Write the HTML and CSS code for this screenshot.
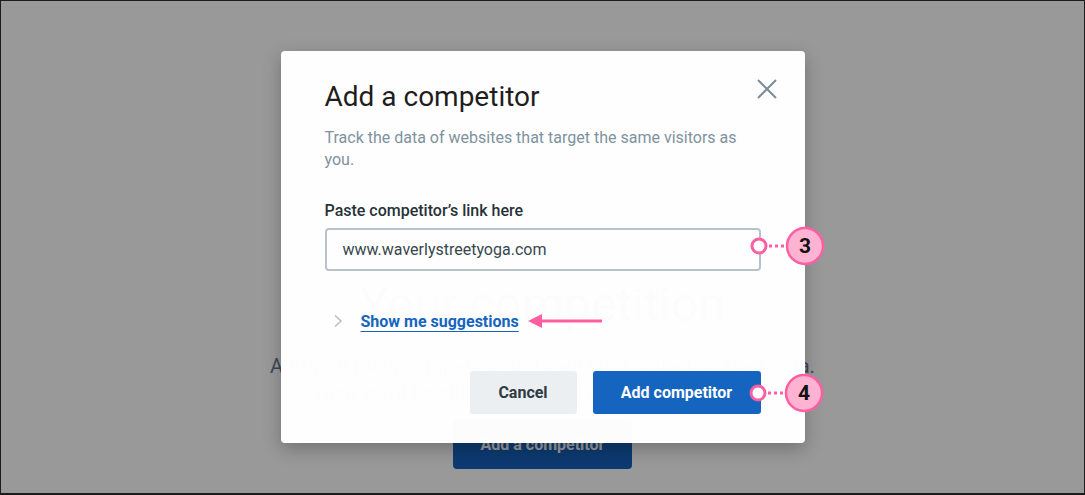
FILE: index.html
```html
<!DOCTYPE html>
<html lang="en">
<head>
<meta charset="utf-8">
<title>Add a competitor</title>
<link rel="stylesheet" href="styles.css">
</head>
<body>
<div class="screen">
  <main class="page">
    <div class="illus"></div>
    <h1 class="page-title">Your competition</h1>
    <p class="page-text">Add your main competitor and we'll start collecting their data.<br>Then you'll be able to compare your data with theirs.</p>
    <button class="page-btn" type="button">Add a competitor</button>
  </main>
  <div class="overlay">
    <section class="modal">
      <button class="close" type="button" aria-label="Close">
        <svg width="20" height="20" viewBox="0 0 20 20"><path d="M1 1L19 19M19 1L1 19" stroke="#7b8d98" stroke-width="2" fill="none"/></svg>
      </button>
      <h2 class="title">Add a competitor</h2>
      <p class="subtitle">Track the data of websites that target the same visitors as you.</p>
      <label class="label" for="link">Paste competitor’s link here</label>
      <div class="field">
        <div class="input" id="link">www.waverlystreetyoga.com</div>
        <svg class="marker" width="76" height="40" viewBox="0 0 76 40">
          <circle cx="9" cy="20" r="7" fill="#fff" stroke="#ff5fa2" stroke-width="3"/>
          <line x1="19" y1="20" x2="36" y2="20" stroke="#ff5fa2" stroke-width="3" stroke-dasharray="3 3"/>
          <circle cx="55" cy="20" r="18" fill="#ffb3d3" stroke="#ff5fa2" stroke-width="2.5"/>
          <text x="55" y="27" text-anchor="middle" class="marker-num">3</text>
        </svg>
      </div>
      <div class="suggest">
        <svg class="chev" width="10" height="14" viewBox="0 0 10 14"><path d="M2 1.5L8 7L2 12.5" stroke="#b3c0c8" stroke-width="1.6" fill="none"/></svg>
        <a class="link" href="#">Show me suggestions</a>
        <svg class="arrow" width="76" height="16" viewBox="0 0 76 16"><path d="M0 8L14 1V15Z" fill="#ff5fa2"/><line x1="12" y1="8" x2="74" y2="8" stroke="#ff5fa2" stroke-width="3"/></svg>
      </div>
      <div class="actions">
        <button class="btn btn-cancel" type="button">Cancel</button>
        <div class="field">
          <button class="btn btn-add" type="button">Add competitor</button>
          <svg class="marker" width="76" height="40" viewBox="0 0 76 40">
            <circle cx="9" cy="20" r="7" fill="#fff" stroke="#ff5fa2" stroke-width="3"/>
            <line x1="19" y1="20" x2="36" y2="20" stroke="#ff5fa2" stroke-width="3" stroke-dasharray="3 3"/>
            <circle cx="55" cy="20" r="18" fill="#ffb3d3" stroke="#ff5fa2" stroke-width="2.5"/>
            <text x="55" y="27" text-anchor="middle" class="marker-num">4</text>
          </svg>
        </div>
      </div>
    </section>
  </div>
</div>
</body>
</html>
```

FILE: styles.css
```css
* { box-sizing: border-box; }
html, body { margin: 0; padding: 0; }
body {
  font-family: Roboto, "Liberation Sans", Arial, sans-serif;
  background: #fff;
}
.screen {
  position: relative;
  width: 1085px;
  height: 495px;
  overflow: hidden;
  border: 1px solid #1c1c1c;
  border-bottom-width: 2px;
  background: #fff;
}
.page {
  display: flex;
  flex-direction: column;
  align-items: center;
  padding-top: 70px;
}
.illus {
  width: 170px;
  height: 160px;
  border-radius: 50%;
  background: #eef2f5;
}
.page-title {
  margin: 46px 0 0;
  font-size: 48px;
  line-height: 56px;
  font-weight: 400;
  color: #3b4a5a;
}
.page-text {
  margin: 20px 0 0;
  font-size: 20px;
  line-height: 27px;
  color: #66788e;
  text-align: center;
  white-space: nowrap;
}
.page-btn {
  margin-top: 12px;
  width: 179px;
  height: 50px;
  border: 0;
  border-radius: 4px;
  background: #1762bd;
  color: #fff;
  font: 700 16px Roboto, "Liberation Sans", sans-serif;
}
.overlay {
  position: absolute;
  inset: 0;
  background: rgba(0, 0, 0, 0.4);
  display: flex;
  align-items: center;
  justify-content: center;
}
.modal {
  position: relative;
  width: 524px;
  height: 392px;
  background: rgba(255, 255, 255, 0.99);
  border-radius: 4px;
  box-shadow: 0 6px 18px rgba(0, 0, 0, 0.25);
  padding: 30px 44px 29px;
  display: flex;
  flex-direction: column;
}
.close {
  position: absolute;
  top: 28px;
  right: 28px;
  width: 20px;
  height: 20px;
  padding: 0;
  border: 0;
  background: none;
  display: flex;
}
.title {
  margin: 0;
  font-size: 28px;
  line-height: 32px;
  font-weight: 400;
  color: #1e1e1e;
}
.subtitle {
  margin: 14px 0 0;
  max-width: 420px;
  font-size: 16px;
  line-height: 22px;
  color: #7f929e;
}
.label {
  margin-top: 30px;
  font-size: 16px;
  line-height: 20px;
  font-weight: 500;
  color: #263238;
}
.field {
  position: relative;
}
.input {
  margin-top: 7px;
  height: 43px;
  border: 2px solid #b7c3cb;
  border-radius: 4px;
  padding: 0 16px;
  display: flex;
  align-items: center;
  font-size: 16px;
  color: #37474f;
}
.marker {
  position: absolute;
  right: -65px;
  top: 50%;
  margin-top: -20px;
  overflow: visible;
}
.marker-num {
  font: 700 21px Roboto, "Liberation Sans", sans-serif;
  fill: #111;
}
.suggest {
  margin-top: 40px;
  display: flex;
  align-items: center;
  height: 20px;
}
.chev {
  margin-left: 8px;
}
.link {
  margin-left: 18px;
  font-size: 16px;
  font-weight: 700;
  color: #1565c0;
  text-decoration: underline;
  text-underline-offset: 4px;
  text-decoration-thickness: 1px;
}
.arrow {
  margin-left: 9px;
}
.actions {
  margin-top: auto;
  display: flex;
  justify-content: flex-end;
  gap: 16px;
}
.btn {
  height: 43px;
  border: 0;
  border-radius: 3px;
  font: 700 16px Roboto, "Liberation Sans", sans-serif;
  padding: 0 26px;
}
.btn-cancel {
  width: 107px;
  background: #eceff1;
  color: #2f3b43;
}
.btn-add {
  width: 168px;
  background: #1565c0;
  color: #fff;
}
.actions .marker {
  right: -64px;
}
```
